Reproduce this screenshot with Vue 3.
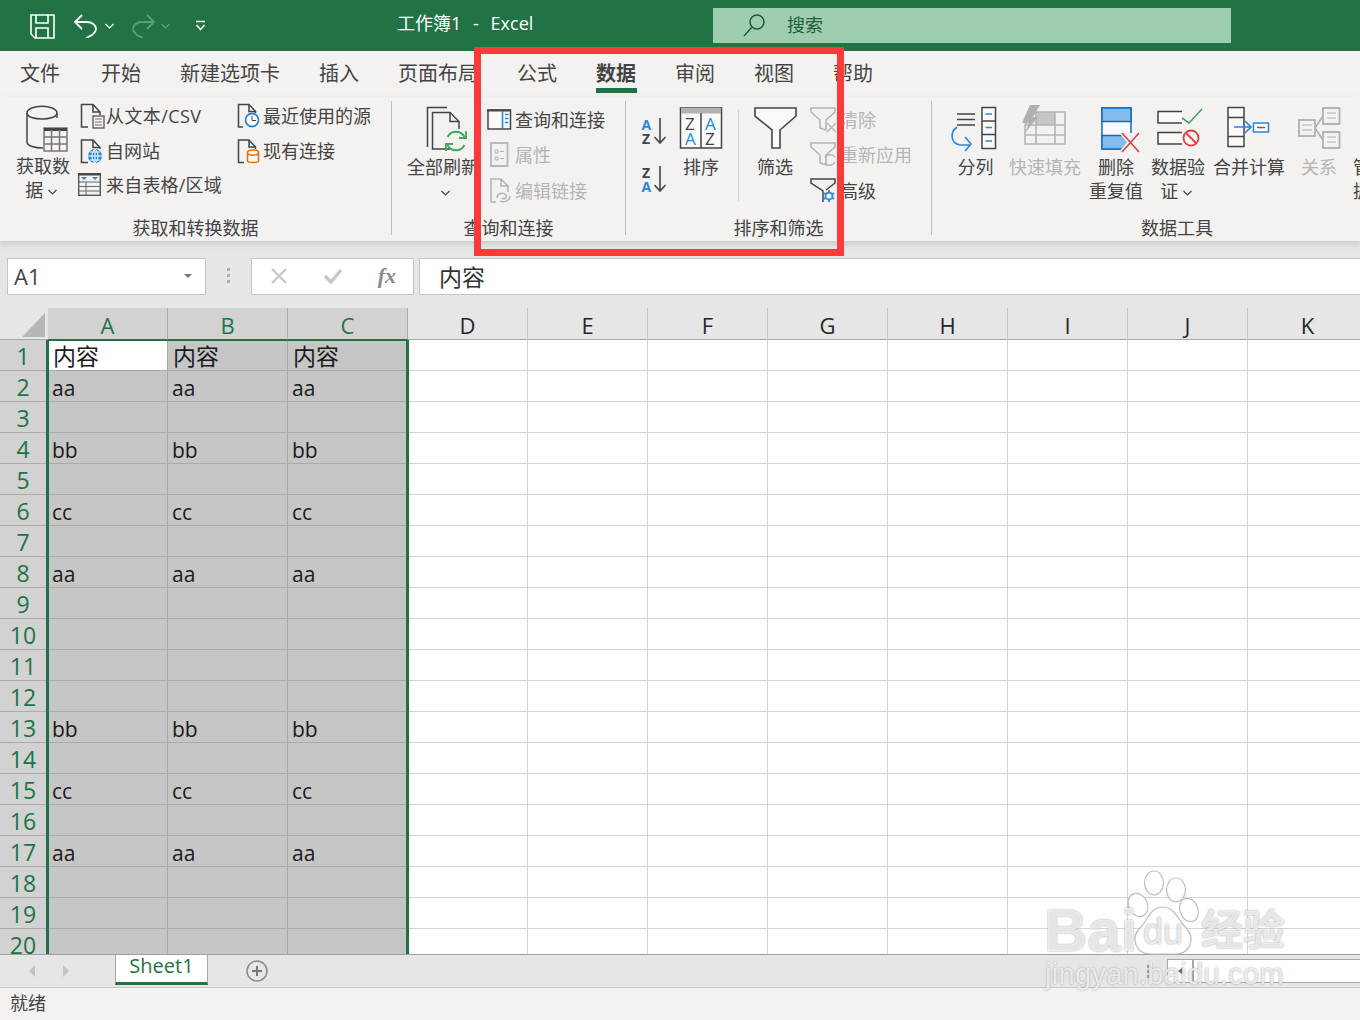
<template>
  <div class="app">
    <header class="title">
      <svg class="save" viewBox="0 0 25 25"><path d="M1 1H24V24H5L1 20Z M6 1V9H18V1 M6 24V14H18V24" /></svg>
      <svg class="undo" viewBox="0 0 24 24"><path d="M8 1L1 8L8 15 M1 8H13C18 8 22 11 22 15C22 18 20 19 18 21L12 24" /></svg>
      <svg class="chev wh" viewBox="0 0 9 6"><path d="M.5 1L4.5 5L8.5 1" /></svg>
      <svg class="undo redo" viewBox="0 0 24 24"><path d="M16 1L23 8L16 15 M23 8H11C6 8 2 11 2 15C2 18 4 19 6 21L12 24" /></svg>
      <svg class="chev wh dim" viewBox="0 0 9 6"><path d="M.5 1L4.5 5L8.5 1" /></svg>
      <svg class="custom" viewBox="0 0 11 11"><path d="M1 1.500H10 M1.500 5L5.500 9.500L9.500 5" /></svg>
      <div class="doc-title">工作簿1&nbsp; -&nbsp; Excel</div>
      <div class="search">
        <svg class="mag" viewBox="0 0 24 24"><circle cx="15" cy="9" r="7" /><path d="M10 14L2 23" /></svg>
        <span>搜索</span>
      </div>
    </header>

    <nav class="tabs">
      <span v-for="t in tabs" :key="t" class="tab" :class="{ on: t === '数据' }">{{ t }}</span>
    </nav>

    <section class="ribbon">
      <!-- 获取和转换数据 -->
      <div class="group g1">
        <div class="gc">
          <div class="big w56">
            <svg width="56" height="50" viewBox="15 105 56 50">
              <path class="ln" d="M57 118V113C57 104 27 104 27 113V142C27 146 35 148 43 148" />
              <path class="ln" d="M27 113C27 121 57 121 57 113" />
              <rect x="44" y="128" width="23" height="23" fill="#f3f2f1" stroke="#777" stroke-width="1.500" />
              <path d="M44 129.500H67" stroke="#444" stroke-width="3" />
              <path d="M44 137H67M44 144H67M51.500 130V151M59.500 130V151" stroke="#777" stroke-width="1.500" />
            </svg>
            <span class="up">获取数<br />据 <svg class="chev tail" viewBox="0 0 9 6"><path d="M.5 1L4.500 5L8.500 1" /></svg></span>
          </div>
          <div class="list l1 c2">
            <div class="sm">
              <svg class="si" viewBox="78 102 28 28">
                <path class="ln" d="M88 127H81.500V104.500H93L100 112V115" /><path class="ln" d="M93 104.500V112H100" />
                <rect x="93" y="116" width="11" height="12" fill="#f3f2f1" stroke="#555" stroke-width="1.300" />
                <path d="M95 119H102M95 122H102M95 125H102" stroke="#777" />
              </svg>
              <span class="wide">从文本/CSV</span>
            </div>
            <div class="sm">
              <svg class="si" viewBox="78 136 28 28">
                <path class="ln" d="M88 161.500H81.500V139H93L100 146.500V148" /><path class="ln" d="M93 139V146.500H100" />
                <circle cx="95" cy="155" r="7" fill="#2b88d8" />
                <path d="M88 155H102M95 148V162M90 151H100M90 159H100M95 148C91 151 91 159 95 162C99 159 99 151 95 148" stroke="#fff" fill="none" />
              </svg>
              <span>自网站</span>
            </div>
            <div class="sm">
              <svg class="si" viewBox="78 170 28 28">
                <rect x="78.700" y="172.700" width="21.600" height="21.600" fill="#f3f2f1" stroke="#555" stroke-width="1.400" />
                <path d="M78 173.500H101" stroke="#444" stroke-width="2" />
                <path d="M81 176H87L84 179ZM92 176H98L95 179Z" fill="#2b88d8" />
                <path d="M78 181H101M78 185.500H101M78 190H101M86 181V195" stroke="#666" />
              </svg>
              <span class="wide2">来自表格/区域</span>
            </div>
          </div>
          <div class="list l1 c3">
            <div class="sm">
              <svg class="si" viewBox="235 102 28 28">
                <path class="ln" d="M243 127H238.500V104.500H249L255.500 111.500V113" /><path class="ln" d="M249 104.500V111.500H255.500" />
                <circle cx="252" cy="120" r="6.500" fill="#fff" stroke="#2b88d8" stroke-width="1.800" />
                <path d="M252 116V120.500H256" stroke="#444" fill="none" />
              </svg>
              <span>最近使用的源</span>
            </div>
            <div class="sm">
              <svg class="si" viewBox="235 136 28 28">
                <path class="ln" d="M244 161.500H238.500V139H249L255.500 146V148" /><path class="ln" d="M249 139V146H255.500" />
                <path d="M247.500 151.500C247.500 148 258.500 148 258.500 151.500V160C258.500 162 247.500 162 247.500 160Z M247.500 151.500C247.500 155 258.500 155 258.500 151.500" fill="#f9f9f9" stroke="#e3730e" stroke-width="1.500" />
              </svg>
              <span>现有连接</span>
            </div>
          </div>
        </div>
        <div class="glabel">获取和转换数据</div>
      </div>
      <div class="sep"></div>

      <!-- 查询和连接 -->
      <div class="group g2">
        <div class="gc">
          <div class="big w72">
            <svg width="72" height="50" viewBox="407 105 72 50">
              <path class="ln" d="M447 107.500H427.500V147" />
              <path class="ln" d="M450 149H432.500V112.500H450L459 121.500V129" /><path class="ln" d="M450 112.500V121.500H459" />
              <path d="M447.500 137A9.500 9.500 0 0 1 464.500 137 M464.500 145A9.500 9.500 0 0 1 447.500 145" fill="none" stroke="#3fa75c" stroke-width="1.800" />
              <path d="M466 131V138H459 M446 151V144H453" fill="none" stroke="#3fa75c" stroke-width="1.800" />
            </svg>
            <span>全部刷新<br /><svg class="chev lead" viewBox="0 0 9 6"><path d="M.5 1L4.500 5L8.500 1" /></svg></span>
          </div>
          <div class="list l2 c4">
            <div class="sm">
              <svg class="si" viewBox="487 106 28 28">
                <rect x="488" y="110" width="22.500" height="19" fill="#fafafa" stroke="#444" stroke-width="1.500" />
                <path d="M487 110.500H511" stroke="#444" stroke-width="2" />
                <path d="M502.500 111V129" stroke="#2b88d8" stroke-width="1.600" />
                <path d="M505 114.500H508.500M505 118.500H508.500M505 122.500H508.500" stroke="#2b88d8" stroke-width="1.400" />
              </svg>
              <span>查询和连接</span>
            </div>
            <div class="sm off">
              <svg class="si" viewBox="487 142 28 28">
                <rect x="491" y="144" width="16.500" height="23" fill="none" stroke="#b4b4b4" stroke-width="1.800" />
                <path d="M495 151H498V154H495ZM495 158H498V161H495ZM500 152.500H504M500 159.500H504" stroke="#b4b4b4" fill="none" />
              </svg>
              <span>属性</span>
            </div>
            <div class="sm off">
              <svg class="si" viewBox="487 178 28 28">
                <path d="M496 203H491V180H501L508 187V193 M501 180V187H508" fill="none" stroke="#b4b4b4" stroke-width="1.600" />
                <path d="M497 199C497 194 504 193 506 196C508 199 503 201 502 199M510 197C510 202 503 204 500 202" fill="none" stroke="#b4b4b4" stroke-width="1.500" />
              </svg>
              <span>编辑链接</span>
            </div>
          </div>
        </div>
        <div class="glabel">查询和连接</div>
      </div>
      <div class="sep"></div>

      <!-- 排序和筛选 -->
      <div class="group g3">
        <div class="gc">
          <svg class="sortcol" width="26" height="90" viewBox="641 105 26 90">
            <text x="641.500" y="130" class="az bl">A</text>
            <text x="642" y="144" class="az dk">Z</text>
            <path d="M660 118V143M654.500 137L660 143L665.500 137" fill="none" stroke="#444" stroke-width="1.600" />
            <text x="642" y="178" class="az dk">Z</text>
            <text x="641.500" y="192" class="az bl">A</text>
            <path d="M660 166V191M654.500 185L660 191L665.500 185" fill="none" stroke="#444" stroke-width="1.600" />
          </svg>
          <div class="big w52 sortbtn">
            <svg width="52" height="50" viewBox="675 105 52 50">
              <rect x="680.500" y="108" width="41" height="40" fill="#fafafa" stroke="#444" stroke-width="1.500" />
              <rect x="681" y="108" width="40" height="5.500" fill="#b2b2b2" />
              <path d="M701 113V148" stroke="#444" stroke-width="1.500" />
              <text x="685" y="130" class="zb dk">Z</text>
              <text x="705" y="130" class="zb bl">A</text>
              <text x="685" y="145" class="zb bl">A</text>
              <text x="705" y="145" class="zb dk">Z</text>
            </svg>
            <span>排序</span>
          </div>
          <div class="vsep"></div>
          <div class="big w52">
            <svg width="52" height="50" viewBox="749 105 52 50">
              <path d="M755 108H796V116L780 130V148H772V130L755 116Z" fill="#fafafa" stroke="#444" stroke-width="1.600" />
            </svg>
            <span>筛选</span>
          </div>
          <div class="list l2 c5">
            <div class="sm off">
              <svg class="si30" viewBox="810 106 30 28">
                <path d="M811 108H835V112L826 120V130L820 128V120L811 112Z" fill="none" stroke="#b4b4b4" stroke-width="1.600" />
                <path d="M827 123L836 132M836 123L827 132" stroke="#b4b4b4" stroke-width="1.400" />
              </svg>
              <span>清除</span>
            </div>
            <div class="sm off">
              <svg class="si30" viewBox="810 142 30 28">
                <path d="M811 144H835V148L826 156V166L820 164V156L811 148Z" fill="none" stroke="#b4b4b4" stroke-width="1.600" />
                <path d="M825 159A6 6 0 0 1 835 158M835 163A6 6 0 0 1 825 164" fill="none" stroke="#b4b4b4" stroke-width="1.400" />
              </svg>
              <span>重新应用</span>
            </div>
            <div class="sm">
              <svg class="si30" viewBox="810 178 30 28">
                <path d="M823 203V192L811 184V180H835V184L826 191" fill="none" stroke="#444" stroke-width="1.500" />
                <circle cx="829" cy="197" r="3.500" fill="#f3f2f1" stroke="#2b88d8" stroke-width="1.800" />
                <path d="M829 191V193.500M829 200.500V203M823.800 194L826 195.300M832 198.700L834.200 200M834.200 194L832 195.300M826 198.700L823.800 200" stroke="#2b88d8" stroke-width="1.800" />
              </svg>
              <span>高级</span>
            </div>
          </div>
        </div>
        <div class="glabel">排序和筛选</div>
      </div>
      <div class="sep"></div>

      <!-- 数据工具 -->
      <div class="group g4">
        <div class="gc tools">
          <div class="big w51">
            <svg width="51" height="50" viewBox="950 105 51 50">
              <path d="M957 114H975M957 119.500H975M957 125H975" stroke="#444" stroke-width="1.500" />
              <rect x="982" y="107.500" width="13.500" height="41" fill="#fafafa" stroke="#444" stroke-width="1.500" />
              <path d="M982 121H995M982 134.500H995" stroke="#444" stroke-width="1.500" />
              <path d="M985.500 114H992M985.500 127.500H992M985.500 141H992" stroke="#2b88d8" stroke-width="1.500" />
              <path d="M957 127C950 132 950 143 960 145H970M965 137L971 144L965 151" fill="none" stroke="#2b88d8" stroke-width="1.600" />
            </svg>
            <span>分列</span>
          </div>
          <div class="big w72 off">
            <svg width="72" height="50" viewBox="1009 105 72 50">
              <path d="M1035 112H1055V125H1035Z" fill="#c6c6c6" />
              <path d="M1025 144V125L1035 112H1065V144ZM1036 112V144M1055 112V144M1025 125H1065M1025 135H1065" fill="none" stroke="#b4b4b4" stroke-width="1.600" />
              <path d="M1030 105H1040L1033 117H1038L1025 133L1029 123H1022Z" fill="#b0b0b0" />
            </svg>
            <span>快速填充</span>
          </div>
          <div class="big w54">
            <svg width="54" height="50" viewBox="1089 105 54 50">
              <rect x="1102" y="108" width="29" height="41" fill="#fafafa" stroke="#0f6cbd" stroke-width="1.500" />
              <rect x="1102" y="108" width="29" height="13.500" fill="#84bced" stroke="#0f6cbd" stroke-width="1.500" />
              <rect x="1102" y="135.500" width="29" height="13.500" fill="#84bced" stroke="#0f6cbd" stroke-width="1.500" />
              <path d="M1119 133L1127 142L1119 152H1140V133Z" fill="#f3f2f1" />
              <path d="M1122 133L1139 152M1139 133L1122 152" stroke="#ee3b3b" stroke-width="1.600" />
            </svg>
            <span>删除<br />重复值</span>
          </div>
          <div class="big w54">
            <svg width="54" height="50" viewBox="1151 105 54 50">
              <path d="M1182 111.500H1158V123H1182" fill="#fafafa" stroke="#444" stroke-width="1.500" />
              <path d="M1182 132.500H1158V144H1182" fill="#fafafa" stroke="#444" stroke-width="1.500" />
              <path d="M1182 118L1189 123L1202 109" fill="none" stroke="#3fa75c" stroke-width="1.600" />
              <circle cx="1191" cy="138" r="7.500" fill="#fafafa" stroke="#ee3b3b" stroke-width="1.800" />
              <path d="M1186 133L1196 143" stroke="#ee3b3b" stroke-width="1.800" />
            </svg>
            <span>数据验<br />证 <svg class="chev tail" viewBox="0 0 9 6"><path d="M.5 1L4.500 5L8.500 1" /></svg></span>
          </div>
          <div class="big w72">
            <svg width="72" height="50" viewBox="1213 105 72 50">
              <rect x="1228" y="107.500" width="16" height="39" fill="#fafafa" stroke="#444" stroke-width="1.500" />
              <path d="M1228 117.500H1244M1228 136.500H1244" stroke="#444" stroke-width="1.500" />
              <path d="M1234 127H1251M1245 121L1251 127L1245 133" fill="none" stroke="#2b88d8" stroke-width="1.600" />
              <rect x="1253.500" y="123" width="15" height="9" fill="#fafafa" stroke="#2b88d8" stroke-width="1.500" />
              <path d="M1257 127.500H1265" stroke="#666" stroke-width="1.500" />
            </svg>
            <span>合并计算</span>
          </div>
          <div class="big w52 off">
            <svg width="52" height="50" viewBox="1293 105 52 50">
              <rect x="1299" y="120" width="16" height="16" fill="none" stroke="#b0b0b0" stroke-width="1.800" />
              <rect x="1323" y="108" width="16.500" height="16" fill="none" stroke="#b0b0b0" stroke-width="1.800" />
              <rect x="1323" y="132" width="16.500" height="16" fill="none" stroke="#b0b0b0" stroke-width="1.800" />
              <path d="M1315 128L1323 116M1315 128L1323 140" stroke="#b0b0b0" stroke-width="1.500" />
              <path d="M1302 125H1312M1302 130H1312M1327 113H1336M1327 118H1336M1327 137H1336M1327 142H1336" stroke="#b0b0b0" />
            </svg>
            <span>关系</span>
          </div>
          <div class="big w54 left">
            <svg width="54" height="50" viewBox="1353 105 54 50"></svg>
            <span>管理数<br />据模型</span>
          </div>
        </div>
        <div class="glabel">数据工具</div>
      </div>
    </section>

    <section class="formula">
      <div class="namebox"><span>A1</span><i class="tri"></i></div>
      <div class="dots"><b></b><b></b><b></b></div>
      <div class="fnbox">
        <svg width="18" height="18" viewBox="0 0 18 18"><path d="M2 2L16 16M16 2L2 16" stroke="#c8c8c8" stroke-width="2.400" /></svg>
        <svg width="20" height="18" viewBox="0 0 20 18"><path d="M2 9L8 15L18 3" fill="none" stroke="#c8c8c8" stroke-width="3.400" /></svg>
        <span class="fx">fx</span>
      </div>
      <div class="input">内容</div>
    </section>

    <section class="sheet">
      <div class="colhead">
        <div class="corner"><i></i></div>
        <div v-for="(c, i) in cols" :key="c" class="ch" :class="{ sel: i < 3 }">{{ c }}</div>
      </div>
      <div class="body">
        <div v-for="r in 20" :key="r" class="row">
          <div class="rh">{{ r }}</div>
          <div v-for="(c, i) in cols" :key="c" class="cell" :class="{ sel: i < 3, active: r === 1 && i === 0, cn: r === 1 }">
            {{ i < 3 ? values[r] : '' }}
          </div>
        </div>
        <div class="selection"></div>
      </div>
    </section>

    <section class="sheetbar">
      <i class="arr l"></i>
      <i class="arr r"></i>
      <div class="stab">Sheet1</div>
      <svg class="add" viewBox="0 0 22 22"><circle cx="11" cy="11" r="10" fill="none" stroke="#8a8a8a" stroke-width="1.500" /><path d="M6 11H16M11 6V16" stroke="#777" stroke-width="2" /></svg>
      <div class="hdots"><b></b><b></b><b></b></div>
      <div class="hbtn"><i></i></div>
      <div class="htrack"></div>
    </section>

    <footer class="status">就绪</footer>

    <div class="redbox"></div>

    <div class="wm">
      <svg class="paw" viewBox="1125 870 75 90">
        <g fill="#fff" fill-opacity=".8" stroke="#bdbdbd" stroke-width="1.200">
          <ellipse cx="1154" cy="883" rx="9.500" ry="12" />
          <ellipse cx="1176" cy="890" rx="9.500" ry="12" />
          <ellipse cx="1138" cy="905" rx="9.500" ry="12" transform="rotate(-25 1138 905)" />
          <ellipse cx="1189" cy="910" rx="9" ry="12" transform="rotate(-20 1189 910)" />
          <path d="M1163 907C1175 907 1178 920 1186 928C1196 938 1190 954 1176 954H1150C1136 954 1130 938 1140 928C1148 920 1150 907 1163 907Z" />
        </g>
      </svg>
      <span class="wm-bai">Bai</span>
      <span class="wm-du">du</span>
      <span class="wm-jy">经验</span>
      <span class="wm-url">jingyan.baidu.com</span>
    </div>
  </div>
</template>

<script setup>
const tabs = ['文件', '开始', '新建选项卡', '插入', '页面布局', '公式', '数据', '审阅', '视图', '帮助']
const cols = ['A', 'B', 'C', 'D', 'E', 'F', 'G', 'H', 'I', 'J', 'K']
const values = { 1: '内容', 2: 'aa', 4: 'bb', 6: 'cc', 8: 'aa', 13: 'bb', 15: 'cc', 17: 'aa' }
</script>

<style scoped>
.app {
  position: relative;
  width: 1360px;
  height: 1020px;
  overflow: hidden;
  background: #e6e6e6;
  font-family: "Open Sans", "Noto Sans CJK SC", sans-serif;
  color: #444;
}

/* title bar */
.title {
  display: flex;
  align-items: center;
  height: 51px;
  padding-left: 30px;
  box-sizing: border-box;
  background: #217346;
  color: #fff;
}
.title svg { fill: none; stroke: #fff; flex: none; }
.save { width: 25px; height: 25px; margin-top: 1px; stroke-width: 1.600; }
.undo { width: 24px; height: 24px; margin-left: 19px; stroke-width: 1.800; margin-top: 1px; }
.title .redo { margin-left: 17px; stroke: #5e9c7b; }
.chev { width: 9px; height: 6px; fill: none; stroke: #444; stroke-width: 1.200; vertical-align: middle; }
.tail { margin-right: 4px; }
.lead { margin-left: 4px; }
.title .wh { margin-left: 7px; stroke: #fff; }
.title .dim { margin-left: 6px; stroke: #5e9c7b; }
.custom { width: 11px; height: 11px; margin-left: 25px; stroke-width: 1.500; }
.doc-title {
  margin: -6px 0 0 191px;
  width: 316px;
  font-size: 18px;
  line-height: 24px;
  white-space: nowrap;
  word-spacing: 1.200px;
}
.search {
  display: flex;
  align-items: center;
  width: 518px;
  height: 35px;
  margin-top: -1px;
  background: #9fcdb0;
  color: #1f5c3c;
  font-size: 18px;
}
.search span { padding-bottom: 2px; }
.title .mag { width: 24px; height: 24px; margin: 0 21px 0 29px; stroke: #1f5c3c; stroke-width: 1.500; }

/* tabs */
.tabs {
  display: flex;
  gap: 39px;
  height: 46px;
  padding-left: 20px;
  box-sizing: border-box;
  background: #f3f2f1;
  font-size: 20px;
  line-height: 46px;
  white-space: nowrap;
}
.tab { position: relative; height: 42px; }
.tab:first-child { margin-right: 2px; }
.tab.on { font-weight: 700; }
.tab.on::after {
  content: "";
  position: absolute;
  left: 0;
  right: -1px;
  top: 37px;
  height: 5px;
  background: #217346;
}

/* ribbon */
.ribbon {
  display: flex;
  height: 144px;
  overflow: hidden;
  background: #f3f2f1;
  font-size: 18px;
  box-shadow: 0 3px 6px rgba(0, 0, 0, .12);
  position: relative;
}
.group { display: flex; flex-direction: column; flex: none; height: 144px; }
.g1 { width: 391px; }
.g2 { width: 233px; }
.g3 { width: 305px; }
.g4 { width: 490px; }
.gc { display: flex; flex: 1; min-height: 0; padding-left: 15px; }
.glabel { height: 28px; text-align: center; line-height: 30px; white-space: nowrap; }
.sep { flex: none; width: 1px; margin: 4px 0 6px; background: #bdbdbd; }
.vsep { flex: none; width: 1px; height: 91px; margin: 13px 10px 0 11px; background: #cfcfcf; }

.big {
  flex: none;
  padding-top: 8px;
  text-align: center;
  line-height: 24px;
  white-space: nowrap;
}
.big > svg { display: block; }
.up { display: block; margin-top: -1px; }
.w51 { width: 51px; }
.w52 { width: 52px; }
.w54 { width: 54px; }
.w56 { width: 56px; }
.w72 { width: 72px; }
.left { text-align: left; }
.off { color: #b5b5b5; }
.ln { fill: none; stroke: #444; stroke-width: 1.500; }

.list { flex: none; }
.l1 { padding-top: 2px; }
.l1 .sm { height: 34.500px; }
.l2 { padding-top: 5px; }
.l2 .sm { height: 35.600px; }
.c2 { width: 157px; margin-left: 7px; }
.c4 { margin-left: 8px; }
.c5 { margin-left: 9px; }
.sm { display: flex; align-items: center; white-space: nowrap; }
.sm span { padding-bottom: 2px; }
.wide { letter-spacing: .4px; }
.wide2 { letter-spacing: .2px; }
.si { flex: none; width: 28px; height: 28px; }
.si30 { flex: none; width: 30px; height: 28px; }

.sortcol { flex: none; margin-top: 8px; }
.sortbtn { margin-left: 8px; }
.az { font: 700 14px "Open Sans", sans-serif; }
.zb { font: 400 17px "Open Sans", sans-serif; }
.bl { fill: #2b88d8; }
.dk { fill: #444; }
.tools { padding-left: 18px; gap: 8px; }

/* formula */
.formula {
  display: flex;
  align-items: center;
  height: 67px;
  padding: 0 0 0 7px;
  box-sizing: border-box;
  background: #e6e6e6;
}
.namebox {
  display: flex;
  align-items: center;
  justify-content: space-between;
  width: 199px;
  height: 37px;
  padding: 0 13px 0 6px;
  box-sizing: border-box;
  margin-top: 3px;
  background: #fff;
  border: 1px solid #c6c6c6;
  font-size: 22px;
  color: #444;
}
.tri { width: 0; height: 0; border: 4px solid transparent; border-top: 4px solid #777; border-bottom: 0; }
.dots { display: flex; flex-direction: column; gap: 3px; width: 45px; align-items: center; margin-top: 2px; }
.dots b { width: 3px; height: 3px; background: #b0b0b0; }
.fnbox {
  display: flex;
  align-items: center;
  justify-content: space-between;
  width: 163px;
  height: 37px;
  padding: 0 17px 0 18px;
  box-sizing: border-box;
  margin-top: 3px;
  background: #fff;
  border: 1px solid #c6c6c6;
}
.fx {
  font: italic 700 22px "Liberation Serif", serif;
  color: #8a8a8a;
}
.input {
  flex: 1;
  height: 37px;
  margin: 3px 0 0 5px;
  padding-left: 19px;
  box-sizing: border-box;
  background: #fff;
  border: 1px solid #c6c6c6;
  border-right: 0;
  font-size: 23px;
  line-height: 37px;
  color: #333;
}

/* sheet */
.sheet { position: relative; background: #fff; }
.colhead {
  display: flex;
  height: 32px;
  background: #e6e6e6;
  box-sizing: border-box;
}
.corner { position: relative; flex: none; width: 48px; height: 32px; box-sizing: border-box; border-bottom: 1px solid #a8a8a8; }
.corner i {
  position: absolute;
  left: 22px;
  top: 5px;
  width: 23px;
  height: 24px;
  background: #b6b6b6;
  clip-path: polygon(100% 0, 100% 100%, 0 100%);
}
.ch {
  flex: none;
  width: 120px;
  box-sizing: border-box;
  border-right: 1px solid #c4c4c4;
  border-bottom: 1px solid #a8a8a8;
  text-align: center;
  font-size: 22px;
  line-height: 34px;
  color: #262626;
}
.ch.sel { background: #d2d2d2; color: #217346; border-right-color: #ababab; border-bottom-color: #217346; }
.body { position: relative; height: 614px; overflow: hidden; background: #fff; }
.row { display: flex; height: 31px; }
.rh {
  flex: none;
  width: 48px;
  padding-right: 2px;
  box-sizing: border-box;
  background: #d2d2d2;
  border-bottom: 1px solid #ababab;
  text-align: center;
  font-size: 23px;
  line-height: 33px;
  color: #217346;
}
.cell {
  flex: none;
  width: 120px;
  padding-left: 4px;
  box-sizing: border-box;
  border-right: 1px solid #d4d4d4;
  border-bottom: 1px solid #d4d4d4;
  font-size: 21px;
  line-height: 34px;
  color: #1b1b1b;
  white-space: nowrap;
  overflow: hidden;
}
.cell.sel { background: #c6c6c6; border-color: #a9a9a9; }
.cell.active { background: #fff; }
.cell.cn { padding-left: 5px; font-size: 23px; line-height: 32px; }
.selection {
  position: absolute;
  left: 46px;
  top: -1px;
  width: 363px;
  height: 640px;
  box-sizing: border-box;
  border: 2px solid #217346;
  border-left-width: 3px;
  border-right-width: 3px;
}

/* sheet bar */
.sheetbar {
  display: flex;
  align-items: center;
  height: 34px;
  box-sizing: border-box;
  background: #e6e6e6;
  border-top: 1px solid #a0a0a0;
  border-bottom: 1px solid #c8c8c8;
}
.arr { width: 0; height: 0; border: 6px solid transparent; }
.arr.l { margin-left: 29px; border-left: 0; border-right-color: #c4c4c4; }
.arr.r { margin-left: 28px; border-right: 0; border-left-color: #c4c4c4; }
.stab {
  width: 93px;
  height: 30px;
  margin: -3px 0 0 46px;
  box-sizing: border-box;
  background: #fff;
  border: 1px solid #a8a8a8;
  border-top: 0;
  border-bottom: 3px solid #217346;
  text-align: center;
  font-size: 20px;
  line-height: 22px;
  color: #217346;
}
.add { width: 22px; height: 22px; margin: 0 0 0 38px; }
.hdots { display: flex; flex-direction: column; gap: 2px; margin-left: 879px; }
.hdots b { width: 3px; height: 3px; background: #9a9a9a; }
.hbtn {
  display: flex;
  align-items: center;
  justify-content: center;
  width: 26px;
  height: 24px;
  margin-left: 17px;
  box-sizing: border-box;
  background: #fff;
  border: 1px solid #a8a8a8;
}
.hbtn i { width: 0; height: 0; border: 4px solid transparent; border-left: 0; border-right: 5px solid #666; }
.htrack { flex: 1; height: 24px; box-sizing: border-box; background: #fff; border: 1px solid #a8a8a8; border-right: 0; }

.status {
  height: 32px;
  padding-left: 10px;
  background: #f3f2f1;
  font-size: 18px;
  line-height: 30px;
}

.redbox {
  position: absolute;
  left: 474px;
  top: 47px;
  width: 370px;
  height: 209px;
  box-sizing: border-box;
  border: 7px solid #fb3a3a;
}

/* watermark */
.wm { position: absolute; left: 0; top: 0; width: 1360px; height: 1020px; pointer-events: none; }
.paw { position: absolute; left: 1125px; top: 870px; width: 75px; height: 90px; }
.wm span {
  position: absolute;
  color: rgba(255, 255, 255, .75);
  font-family: "Liberation Sans", "Noto Sans CJK SC", sans-serif;
  white-space: nowrap;
  text-shadow: 0 0 2px #999;
}
.wm-bai { left: 1044px; top: 898px; font-size: 60px; font-weight: 700; line-height: 66px; }
.wm-du { left: 1143px; top: 912px; font-size: 36px; line-height: 40px; }
.wm-jy { left: 1201px; top: 905px; font-size: 42px; font-weight: 700; line-height: 52px; }
.wm-url { left: 1045px; top: 955px; font-size: 29px; line-height: 38px; letter-spacing: .3px; }
</style>
